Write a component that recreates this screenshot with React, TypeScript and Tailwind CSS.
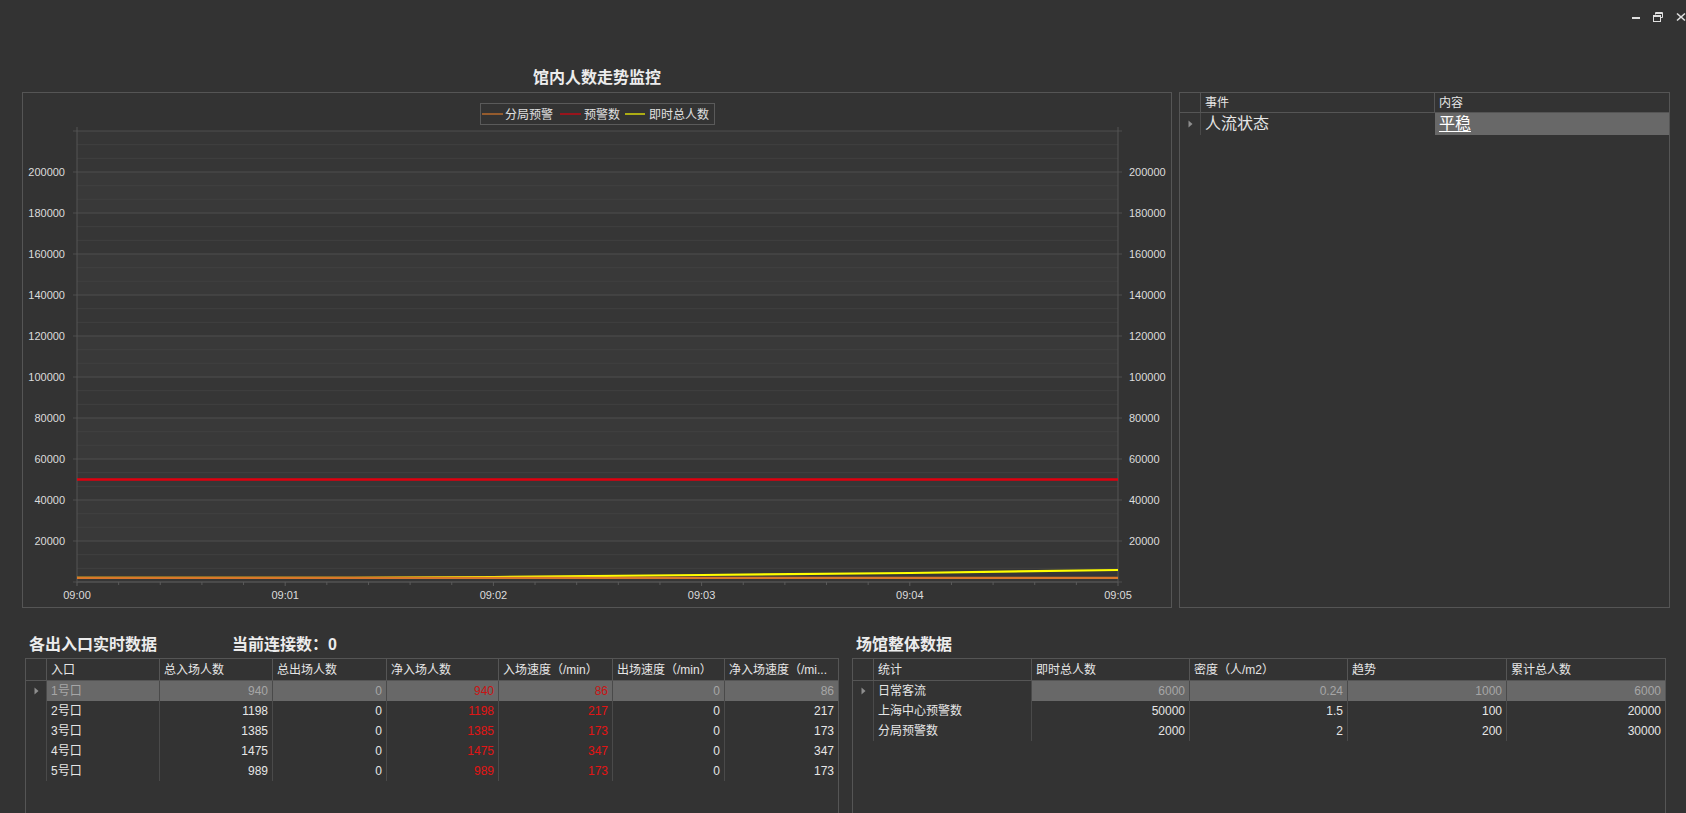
import React from 'react';

// plot geometry, in svg coords of the chart panel (panel inner origin = page 23,92)
const PL = 54;
const PR = 1095;
const PT = 38;
const Y0 = 489;
const yOf = (v: number) => Y0 - (v / 20000) * 41;
const xOf = (min: number) => PL + ((PR - PL) / 5) * min;

const gates = [
  ['1号口', '940', '0', '940', '86', '0', '86'],
  ['2号口', '1198', '0', '1198', '217', '0', '217'],
  ['3号口', '1385', '0', '1385', '173', '0', '173'],
  ['4号口', '1475', '0', '1475', '347', '0', '347'],
  ['5号口', '989', '0', '989', '173', '0', '173'],
];
const gateCols = ['w-[21px]', 'w-[113px]', 'w-[113px]', 'w-[114px]', 'w-[112px]', 'w-[114px]', 'w-[112px]', 'flex-1'];
const gateHead = ['入口', '总入场人数', '总出场人数', '净入场人数', '入场速度（/min）', '出场速度（/min）', '净入场速度（/mi...'];

const venue = [
  ['日常客流', '6000', '0.24', '1000', '6000'],
  ['上海中心预警数', '50000', '1.5', '100', '20000'],
  ['分局预警数', '2000', '2', '200', '30000'],
];
const venueCols = ['w-[21px]', 'w-[158px]', 'w-[158px]', 'w-[158px]', 'w-[159px]', 'flex-1'];
const venueHead = ['统计', '即时总人数', '密度（人/m2）', '趋势', '累计总人数'];

const Arrow = () => (
  <svg width="5" height="8" viewBox="0 0 5 8">
    <path d="M0.5 0.5 L4.5 4 L0.5 7.5 Z" fill="#8e8e8e" />
  </svg>
);

const Chart = () => {
  const grid: React.ReactNode[] = [];
  for (let k = 0; k <= 33; k++) {
    const y = Y0 - (k * 41) / 3;
    const major = k % 3 === 0;
    grid.push(
      <line
        key={'g' + k}
        x1={major ? PL - 4 : PL}
        x2={major ? PR + 4 : PR}
        y1={y}
        y2={y}
        stroke={major ? '#4f4f4f' : '#404040'}
        strokeWidth={1}
      />
    );
  }
  const bands: React.ReactNode[] = [];
  for (let i = 0; i < 11; i++) {
    if (i % 2 === 0) continue;
    bands.push(
      <rect key={'b' + i} x={PL} y={yOf((i + 1) * 20000)} width={PR - PL} height={41} fill="#393939" />
    );
  }
  const ticks: React.ReactNode[] = [];
  for (let i = 0; i <= 25; i++) {
    const x = PL + ((PR - PL) / 25) * i;
    ticks.push(<line key={'t' + i} x1={x} x2={x} y1={Y0} y2={Y0 + (i % 5 === 0 ? 4 : 3)} stroke="#5a5a5a" />);
  }
  const labels = [20000, 40000, 60000, 80000, 100000, 120000, 140000, 160000, 180000, 200000];
  const font = "'Liberation Sans','Noto Sans CJK SC',sans-serif";

  return (
    <svg width="1148" height="514" className="block">
      <rect x={PL} y={PT} width={PR - PL} height={Y0 - PT} fill="#363636" />
      {bands}
      {grid}
      <line x1={PL} x2={PL} y1={PT - 4} y2={Y0} stroke="#555" />
      <line x1={PR} x2={PR} y1={PT - 4} y2={Y0} stroke="#555" />
      <line x1={PL} x2={PR} y1={Y0} y2={Y0} stroke="#555" />
      {ticks}
      {labels.map((v) => (
        <g key={v} fontFamily={font} fontSize="11" fill="#dcdcdc">
          <text x={42} y={yOf(v) + 4} textAnchor="end">{v}</text>
          <text x={1106} y={yOf(v) + 4}>{v}</text>
        </g>
      ))}
      {['09:00', '09:01', '09:02', '09:03', '09:04', '09:05'].map((t, i) => (
        <text key={t} x={xOf(i)} y={506} textAnchor="middle" fontFamily={font} fontSize="11" fill="#dcdcdc">
          {t}
        </text>
      ))}

      {/* series: yellow drawn under orange so it only shows once it climbs */}
      <line x1={PL} x2={PR} y1={yOf(50000)} y2={yOf(50000)} stroke="#e0000f" strokeWidth={2.5} />
      <polyline
        points={`${PL},${yOf(2000)} 330,${yOf(2000)} 470,484 679,482 887,480 ${PR},477`}
        fill="none"
        stroke="#ffff00"
        strokeWidth={2.2}
      />
      <line x1={PL} x2={PR} y1={yOf(2000)} y2={yOf(2000)} stroke="#d9772b" strokeWidth={2.4} />

      {/* legend */}
      <rect x={457.5} y={10.5} width={234} height={21} fill="#333" stroke="#5a5a5a" />
      <g fontFamily={font} fontSize="12" fill="#e0e0e0">
        <line x1={459} x2={480} y1={21} y2={21} stroke="#d9772b" strokeWidth={1.2} />
        <text x={482} y={25.5}>分局预警</text>
        <line x1={537} x2={558} y1={21} y2={21} stroke="#e0000f" strokeWidth={1.2} />
        <text x={561} y={25.5}>预警数</text>
        <line x1={602} x2={622} y1={21} y2={21} stroke="#ffff00" strokeWidth={1.2} />
        <text x={626} y={25.5}>即时总人数</text>
      </g>
    </svg>
  );
};

const WindowButtons = () => (
  <div className="h-[63px] flex justify-end items-start pt-[12px] gap-[13px]">
    <svg width="8" height="10" viewBox="0 0 8 10">
      <rect x="0" y="5" width="8" height="2" fill="#e0e0e0" />
    </svg>
    <svg width="10" height="10" viewBox="0 0 10 10" fill="none" stroke="#e0e0e0">
      <path d="M2.5 2.5 V0.5 H9.5 V5.5 H7.5" />
      <rect x="0.5" y="3.5" width="7" height="6" />
      <line x1="0.5" x2="7.5" y1="4.5" y2="4.5" />
      <line x1="2.5" x2="9.5" y1="1.5" y2="1.5" />
    </svg>
    <svg width="10" height="10" viewBox="0 0 10 10" stroke="#e0e0e0" strokeWidth="1.6">
      <line x1="1" y1="1.5" x2="9" y2="8.5" />
      <line x1="9" y1="1.5" x2="1" y2="8.5" />
    </svg>
  </div>
);

const GateTable = () => (
  <div className="h-[155px] border-l border-r border-t border-[#555] text-[12px]">
    <div className="flex h-[22px] border-b border-[#555]">
      {gateCols.map((w, i) => (
        <div key={i} className={`${w} shrink-0 border-r border-[#555] last:border-r-0 px-1 flex items-center whitespace-nowrap overflow-hidden`}>
          {i > 0 ? gateHead[i - 1] : ''}
        </div>
      ))}
    </div>
    {gates.map((row, r) => {
      const sel = r === 0;
      return (
        <div key={r} className="flex h-[20px]">
          <div className="w-[21px] shrink-0 border-r border-[#4a4a4a] flex items-center justify-center">
            {sel && <Arrow />}
          </div>
          {row.map((cell, c) => {
            const red = c === 3 || c === 4;
            const color = red ? (sel ? 'text-[#c81414]' : 'text-[#e31414]') : sel ? 'text-[#a6a6a6]' : 'text-[#e6e6e6]';
            return (
              <div
                key={c}
                className={`${gateCols[c + 1]} shrink-0 ${c < 6 ? 'border-r border-[#4a4a4a]' : ''} px-1 flex items-center ${c === 0 ? 'justify-start' : 'justify-end'} ${sel ? 'bg-[#686868]' : ''} ${color}`}
              >
                {cell}
              </div>
            );
          })}
        </div>
      );
    })}
  </div>
);

const VenueTable = () => (
  <div className="h-[155px] border-l border-r border-t border-[#555] text-[12px]">
    <div className="flex h-[22px] border-b border-[#555]">
      {venueCols.map((w, i) => (
        <div key={i} className={`${w} shrink-0 border-r border-[#555] last:border-r-0 px-1 flex items-center whitespace-nowrap`}>
          {i > 0 ? venueHead[i - 1] : ''}
        </div>
      ))}
    </div>
    {venue.map((row, r) => {
      const sel = r === 0;
      return (
        <div key={r} className="flex h-[20px]">
          <div className="w-[21px] shrink-0 border-r border-[#4a4a4a] flex items-center justify-center">
            {sel && <Arrow />}
          </div>
          {row.map((cell, c) => {
            const hi = sel && c > 0;
            return (
              <div
                key={c}
                className={`${venueCols[c + 1]} shrink-0 ${c < 4 ? 'border-r border-[#4a4a4a]' : ''} px-1 flex items-center ${c === 0 ? 'justify-start' : 'justify-end'} ${hi ? 'bg-[#686868] text-[#a6a6a6]' : 'text-[#e6e6e6]'}`}
              >
                {cell}
              </div>
            );
          })}
        </div>
      );
    })}
  </div>
);

export default function App() {
  return (
    <div className="w-[1686px] h-[813px] overflow-hidden bg-[#333333] text-[#e6e6e6] font-['Liberation_Sans','Noto_Sans_CJK_SC',sans-serif]">
      <WindowButtons />

      <div className="flex pl-[22px] gap-[7px]">
        <div className="w-[1150px] flex flex-col">
          <div className="h-[29px] flex items-center justify-center text-[16px] font-bold text-[#ececec]">馆内人数走势监控</div>
          <div className="h-[516px] border border-[#555]">
            <Chart />
          </div>
        </div>

        <div className="w-[491px] h-[516px] mt-[29px] border border-[#555] text-[12px]">
          <div className="flex h-[20px] border-b border-[#555]">
            <div className="w-[21px] shrink-0 border-r border-[#555]" />
            <div className="w-[234px] shrink-0 border-r border-[#555] px-1 flex items-center">事件</div>
            <div className="flex-1 px-1 flex items-center">内容</div>
          </div>
          <div className="flex h-[22px] text-[16px]">
            <div className="w-[21px] shrink-0 border-r border-[#4a4a4a] flex items-center justify-center">
              <Arrow />
            </div>
            <div className="w-[234px] shrink-0 px-1 flex items-center">人流状态</div>
            <div className="flex-1 px-1 flex items-center bg-[#686868] text-white">
              <span className="underline underline-offset-2">平稳</span>
            </div>
          </div>
        </div>
      </div>

      <div className="flex pl-[25px] gap-[13px]">
        <div className="w-[814px] flex flex-col">
          <div className="h-[50px] flex items-end pb-[3px] pl-[4px] text-[16px] font-bold text-[#ececec] leading-[20px]">
            <span className="w-[203px]">各出入口实时数据</span>
            <span>当前连接数：0</span>
          </div>
          <GateTable />
        </div>
        <div className="w-[814px] flex flex-col">
          <div className="h-[50px] flex items-end pb-[3px] pl-[4px] text-[16px] font-bold text-[#ececec] leading-[20px]">
            场馆整体数据
          </div>
          <VenueTable />
        </div>
      </div>
    </div>
  );
}
